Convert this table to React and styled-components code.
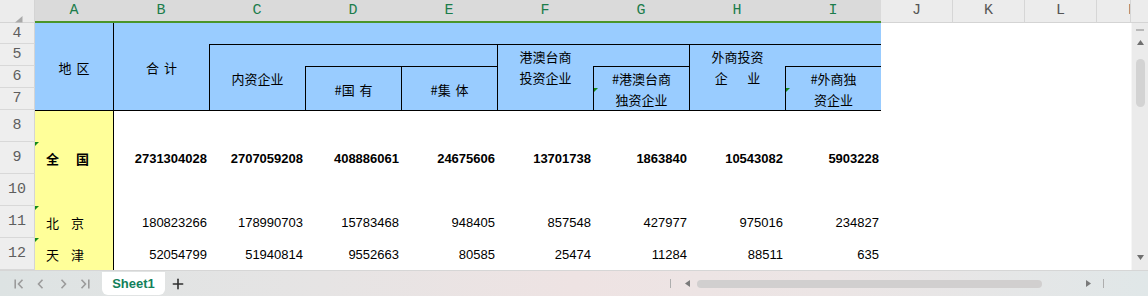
import React from 'react';
import styled, { createGlobalStyle, css } from 'styled-components';
import { Plus } from 'lucide-react';

const GlobalStyle = createGlobalStyle`
  html, body {
    margin: 0;
    padding: 0;
    background: #fff;
  }
  body {
    width: 1148px;
    height: 296px;
    overflow: hidden;
  }
`;

const CJK = `"Noto Sans CJK SC", "Liberation Sans", sans-serif`;
const MONO = `"Liberation Mono", "DejaVu Sans Mono", monospace`;

const fills = {
  blue: '#99ccff',
  yellow: '#ffff99',
  white: '#ffffff',
};

const Window = styled.div`
  width: 1148px;
  height: 296px;
  display: flex;
  flex-direction: column;
  overflow: hidden;
  background: #fff;
`;

/* ---------- column letters ---------- */
const ColumnBar = styled.div`
  display: flex;
  height: 23px;
  flex-shrink: 0;
  background: #ececec;
`;
const Corner = styled.div`
  width: 35px;
  height: 23px;
  box-sizing: border-box;
  border-bottom: 1px solid #d4d4d4;
  border-right: 1px solid #d4d4d4;
  padding: 9px 0 0 15px;
`;
const ColHead = styled.div`
  width: ${p => p.$w}px;
  height: 23px;
  flex-shrink: 0;
  box-sizing: border-box;
  overflow: hidden;
  display: flex;
  justify-content: ${p => (p.$clip ? 'flex-start' : 'center')};
  font-family: ${MONO};
  font-size: 15px;
  line-height: 21px;
  ${p => p.$sel
    ? css`
      background: #dadada;
      color: #1b7d4b;
      border-bottom: 2px solid #4b9529;
    `
    : css`
      background: #ececec;
      color: #555;
      border-bottom: 1px solid #d4d4d4;
      border-right: 1px solid #d6d6d6;
    `}
`;
const ColLetter = styled.span`
  flex-shrink: 0;
  width: ${p => p.$w || 'auto'};
  text-align: center;
`;
const ColFill = styled.div`
  flex: 1;
  border-bottom: 1px solid #d4d4d4;
  box-sizing: border-box;
`;

/* ---------- body ---------- */
const Body = styled.div`
  display: flex;
  height: 247px;
  flex-shrink: 0;
`;
const RowHeads = styled.div`
  width: 35px;
  display: flex;
  flex-direction: column;
  background: #eeeeee;
`;
const RowHead = styled.div`
  height: ${p => p.$h}px;
  flex-shrink: 0;
  box-sizing: border-box;
  border-bottom: 1px solid #d8d8d8;
  border-right: 1px solid #d4d4d4;
  display: flex;
  align-items: center;
  justify-content: center;
  font-family: ${MONO};
  font-size: 15px;
  color: #5e5e5e;
`;

const Sheet = styled.div`
  display: grid;
  grid-template-columns: 78px repeat(8, 96px);
  grid-template-rows: 21px repeat(3, 22px) repeat(5, 32px);
  width: 846px;
  flex-shrink: 0;
`;
const Cell = styled.div`
  position: relative;
  box-sizing: border-box;
  grid-column: ${p => p.$c};
  grid-row: ${p => p.$r};
  background: ${p => fills[p.$fill || 'white']};
  border-top: ${p => (p.$bt ? '1px solid #000' : 'none')};
  border-left: ${p => (p.$bl ? '1px solid #000' : 'none')};
  display: flex;
  align-items: center;
  justify-content: ${p => (p.$align === 'right' ? 'flex-end' : p.$align === 'left' ? 'flex-start' : 'center')};
  padding-right: ${p => (p.$align === 'right' ? '2px' : '0')};
  padding-left: ${p => (p.$align === 'left' ? '11px' : '0')};
  color: #000;
  ${p => p.$flag && css`
    &::before {
      content: '';
      position: absolute;
      top: 0;
      left: 0;
      border-top: 4px solid #13891a;
      border-right: 4px solid transparent;
    }
  `}
`;
const HeadText = styled.span`
  font-family: ${CJK};
  font-size: 13px;
  line-height: 22px;
  white-space: pre;
  word-spacing: 2px;
  transform: translateY(1px);
`;
const Name = styled.span`
  display: flex;
  gap: ${p => p.$gap}px;
  font-family: ${CJK};
  font-size: 13px;
  font-weight: ${p => (p.$bold ? 700 : 400)};
`;
const Num = styled.span`
  font-family: "Liberation Sans", Arial, sans-serif;
  font-size: 13px;
  font-weight: ${p => (p.$bold ? 700 : 400)};
`;
const Blank = styled.div`
  flex: 1;
  background: #fff;
`;

/* ---------- vertical scroll ---------- */
const VScroll = styled.div`
  width: 17px;
  flex-shrink: 0;
  background: #ebebeb;
  border-left: 1px solid #f6f6f6;
  box-sizing: border-box;
  display: flex;
  flex-direction: column;
  align-items: center;
`;
const Dash = styled.div`
  width: 8px;
  height: 2px;
  background: #b8b8b8;
  margin-top: 6px;
`;
const VThumb = styled.div`
  width: 9px;
  height: 48px;
  border-radius: 5px;
  background: #d3d3d3;
  margin-top: 14px;
`;
const Arrow = styled.svg`
  flex-shrink: 0;
  display: block;
`;

/* ---------- sheet tabs ---------- */
const Footer = styled.div`
  height: 26px;
  flex-shrink: 0;
  box-sizing: border-box;
  border-top: 1px solid #d6d6d6;
  background: linear-gradient(90deg, #dde3e3 0%, #e6e4e4 28%, #eee3e3 50%, #ece5e5 72%, #e0e7e8 100%);
  display: flex;
  align-items: center;
  padding-left: 8px;
`;
const NavButton = styled.div`
  width: 22px;
  height: 24px;
  display: flex;
  align-items: center;
  justify-content: center;
`;
const Tab = styled.div`
  align-self: flex-start;
  margin: 1px 0 0 6px;
  width: 63px;
  height: 23px;
  background: #fff;
  border-radius: 0 0 6px 6px;
  display: flex;
  align-items: center;
  justify-content: center;
  font-family: "Liberation Sans", Arial, sans-serif;
  font-size: 13px;
  font-weight: 700;
  color: #12805a;
`;
const AddSheet = styled.div`
  margin-left: 5px;
  display: flex;
  align-items: center;
  color: #2f2f2f;
`;
const HScroll = styled.div`
  margin-left: auto;
  margin-right: 44px;
  display: flex;
  align-items: center;
  height: 100%;
`;
const Tick = styled.div`
  width: 1px;
  height: 9px;
  background: #aeaeae;
  margin-left: ${p => p.$ml || 0}px;
`;
const HThumb = styled.div`
  width: 345px;
  height: 8px;
  border-radius: 4px;
  background: #d1cfcf;
  margin-left: 7px;
`;

const Chevron = ({ dir, bar }) => (
  <svg width="10" height="10" viewBox="0 0 10 10" fill="none" stroke="#9b9b9b" strokeWidth="1.6">
    {dir === 'left'
      ? <polyline points={bar ? '8.5,0.8 4.5,5 8.5,9.2' : '6.5,0.8 2.5,5 6.5,9.2'} />
      : <polyline points={bar ? '1.5,0.8 5.5,5 1.5,9.2' : '3.5,0.8 7.5,5 3.5,9.2'} />}
    {bar && (dir === 'left'
      ? <line x1="1.2" y1="0.5" x2="1.2" y2="9.5" />
      : <line x1="8.8" y1="0.5" x2="8.8" y2="9.5" />)}
  </svg>
);

const columns = [
  ['A', 78], ['B', 96], ['C', 96], ['D', 96], ['E', 96], ['F', 96], ['G', 96], ['H', 96], ['I', 96],
];
const rowHeads = [['4', 21], ['5', 22], ['6', 22], ['7', 22], ['8', 32], ['9', 32], ['10', 32], ['11', 32], ['12', 32]];

const headCells = [
  { c: '1', r: '1 / 5', text: '地 区' },
  { c: '2', r: '1 / 5', bl: true, text: '合 计' },
  { c: '3 / 10', r: '1' },
  { c: '3', r: '2 / 5', bt: true, bl: true, text: '内资企业' },
  { c: '4 / 6', r: '2', bt: true },
  { c: '4', r: '3 / 5', bt: true, bl: true, text: '#国 有' },
  { c: '5', r: '3 / 5', bt: true, bl: true, text: '#集 体' },
  { c: '6', r: '2', bt: true, bl: true, text: '港澳台商' },
  { c: '6', r: '3', bl: true, text: '投资企业' },
  { c: '6', r: '4', bl: true },
  { c: '7', r: '2', bt: true },
  { c: '7', r: '3', bt: true, bl: true, text: '#港澳台商' },
  { c: '7', r: '4', bl: true, flag: true, text: '独资企业' },
  { c: '8', r: '2', bt: true, bl: true, text: '外商投资' },
  { c: '8', r: '3', bl: true, text: '企    业' },
  { c: '8', r: '4', bl: true },
  { c: '9', r: '2', bt: true },
  { c: '9', r: '3', bt: true, bl: true, text: '#外商独' },
  { c: '9', r: '4', bl: true, flag: true, text: '资企业' },
];

const dataRows = [
  { r: 5, top: true },
  { r: 6, name: ['全', '国'], gap: 17, bold: true, vals: ['2731304028', '2707059208', '408886061', '24675606', '13701738', '1863840', '10543082', '5903228'] },
  { r: 7 },
  { r: 8, name: ['北', '京'], gap: 12, vals: ['180823266', '178990703', '15783468', '948405', '857548', '427977', '975016', '234827'] },
  { r: 9, name: ['天', '津'], gap: 12, vals: ['52054799', '51940814', '9552663', '80585', '25474', '11284', '88511', '635'] },
];

export default function App() {
  return (
    <Window>
      <GlobalStyle />
      <ColumnBar>
        <Corner>
          <svg width="8" height="7" viewBox="0 0 8 7">
            <polygon points="7.5,0 7.5,6.5 0,6.5" fill="#a9a9a9" />
          </svg>
        </Corner>
        {columns.map(([l, w]) => (
          <ColHead key={l} $w={w} $sel>{l}</ColHead>
        ))}
        <ColHead $w={72}>J</ColHead>
        <ColHead $w={72}>K</ColHead>
        <ColHead $w={72}>L</ColHead>
        <ColHead $w={34} $clip><ColLetter $w="72px">M</ColLetter></ColHead>
        <ColFill />
      </ColumnBar>

      <Body>
        <RowHeads>
          {rowHeads.map(([n, h]) => (
            <RowHead key={n} $h={h}>{n}</RowHead>
          ))}
        </RowHeads>

        <Sheet>
          {headCells.map((h, i) => (
            <Cell key={i} $c={h.c} $r={h.r} $fill="blue" $bt={h.bt} $bl={h.bl} $flag={h.flag}>
              {h.text && <HeadText>{h.text}</HeadText>}
            </Cell>
          ))}
          {dataRows.map(row => (
            <React.Fragment key={row.r}>
              <Cell $c="1" $r={row.r} $fill="yellow" $bt={row.top} $align="left" $flag={!!row.name}>
                {row.name && (
                  <Name $gap={row.gap} $bold={row.bold}>
                    <span>{row.name[0]}</span>
                    <span>{row.name[1]}</span>
                  </Name>
                )}
              </Cell>
              {Array.from({ length: 8 }).map((_, i) => (
                <Cell key={i} $c={String(i + 2)} $r={row.r} $bt={row.top} $bl={i === 0} $align="right">
                  {row.vals && <Num $bold={row.bold}>{row.vals[i]}</Num>}
                </Cell>
              ))}
            </React.Fragment>
          ))}
        </Sheet>

        <Blank />

        <VScroll>
          <Dash />
          <Arrow width="7" height="5" viewBox="0 0 7 5" style={{ marginTop: '9px' }}>
            <polygon points="3.5,0 7,5 0,5" fill="#6f6f6f" />
          </Arrow>
          <VThumb />
          <Arrow width="7" height="5" viewBox="0 0 7 5" style={{ marginTop: 'auto', marginBottom: '10px' }}>
            <polygon points="0,0 7,0 3.5,5" fill="#6f6f6f" />
          </Arrow>
        </VScroll>
      </Body>

      <Footer>
        <NavButton><Chevron dir="left" bar /></NavButton>
        <NavButton><Chevron dir="left" /></NavButton>
        <NavButton><Chevron dir="right" /></NavButton>
        <NavButton><Chevron dir="right" bar /></NavButton>
        <Tab>Sheet1</Tab>
        <AddSheet><Plus size={16} strokeWidth={2.4} /></AddSheet>
        <HScroll>
          <Tick />
          <Arrow width="5" height="7" viewBox="0 0 5 7" style={{ marginLeft: '14px' }}>
            <polygon points="5,0 5,7 0,3.5" fill="#7a7a7a" />
          </Arrow>
          <HThumb />
          <Arrow width="5" height="7" viewBox="0 0 5 7" style={{ marginLeft: '44px' }}>
            <polygon points="0,0 5,3.5 0,7" fill="#7a7a7a" />
          </Arrow>
          <Tick $ml={12} />
        </HScroll>
      </Footer>
    </Window>
  );
}
